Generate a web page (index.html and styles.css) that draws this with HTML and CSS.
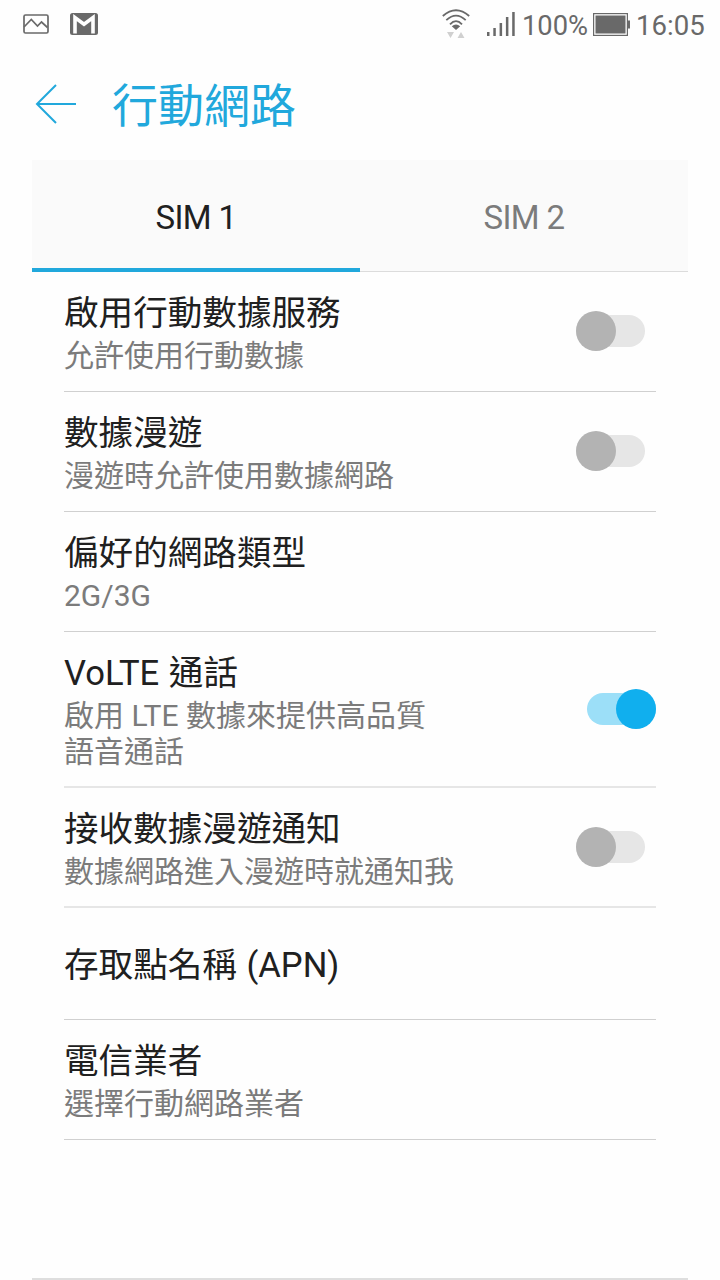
FILE: index.html
```html
<!DOCTYPE html>
<html lang="zh-Hant">
<head>
  <meta charset="UTF-8">
  <meta name="viewport" content="width=device-width, initial-scale=1.0">
  <title>行動網路</title>
  <link rel="stylesheet" href="styles.css">
</head>
<body>
  <div class="status">
    <svg class="status__picture" width="26" height="20" viewBox="0 0 26 20">
      <rect x="1" y="1" width="24" height="18" rx="1.5"/>
      <path d="M1 13L8.300 5.500L14.500 12L18.500 8L24.500 13.500"/>
    </svg>
    <svg class="status__mail" width="28" height="22" viewBox="0 0 28 22">
      <rect width="28" height="22" rx="2.500"/>
      <path d="M5 20.500V4.500L14 11.200L23 4.500V20.500"/>
    </svg>
    <svg class="status__wifi" width="28" height="30" viewBox="0 0 28 30">
      <path class="status__wave" d="M.8 7Q14 -4.500 27.200 7M4.300 11.200Q14 2 23.700 11.200M8 15.300Q14 9 20 15.300"/>
      <path class="status__dot" d="M9.800 17.300Q14 13.800 18.200 17.300L14 21z"/>
      <path class="status__traffic" d="M5 23h7l-3.500 6zM15.500 29h7l-3.500-6z"/>
    </svg>
    <svg class="status__signal" width="28" height="24" viewBox="0 0 28 24">
      <path d="M0 20h2.500v4H0zM6.300 16h2.500v8H6.300zM12.600 11h2.500v13h-2.500zM18.900 5h2.500v19h-2.500zM25.200 0h2.500v24h-2.500z"/>
    </svg>
    <span class="status__level">100%</span>
    <svg class="status__battery" width="37" height="23" viewBox="0 0 37 23">
      <rect class="status__case" x=".6" y=".6" width="33.800" height="21.800"/>
      <path d="M2.500 2.500h30v18h-30zM35 7.500h2v8h-2z"/>
    </svg>
    <span class="status__time">16:05</span>
  </div>

  <header class="header">
    <svg class="header__back" width="41" height="42" viewBox="0 0 41 42">
      <path d="M21 2L2 21L21 40M2 21H41"/>
    </svg>
    <h1 class="header__title">行動網路</h1>
  </header>

  <nav class="tabs">
    <div class="tabs__item tabs__item--active">SIM 1</div>
    <div class="tabs__item">SIM 2</div>
  </nav>

  <main class="settings">
    <div class="setting">
      <div class="setting__text">
        <div class="setting__title">啟用行動數據服務</div>
        <div class="setting__summary">允許使用行動數據</div>
      </div>
      <div class="switch"></div>
    </div>
    <div class="setting">
      <div class="setting__text">
        <div class="setting__title">數據漫遊</div>
        <div class="setting__summary">漫遊時允許使用數據網路</div>
      </div>
      <div class="switch"></div>
    </div>
    <div class="setting">
      <div class="setting__text">
        <div class="setting__title">偏好的網路類型</div>
        <div class="setting__summary">2G/3G</div>
      </div>
    </div>
    <div class="setting setting--tall">
      <div class="setting__text">
        <div class="setting__title">VoLTE 通話</div>
        <div class="setting__summary">啟用 LTE 數據來提供高品質<br>語音通話</div>
      </div>
      <div class="switch switch--on"></div>
    </div>
    <div class="setting setting--soft">
      <div class="setting__text">
        <div class="setting__title">接收數據漫遊通知</div>
        <div class="setting__summary">數據網路進入漫遊時就通知我</div>
      </div>
      <div class="switch"></div>
    </div>
    <div class="setting setting--single">
      <div class="setting__text">
        <div class="setting__title">存取點名稱 (APN)</div>
      </div>
    </div>
    <div class="setting">
      <div class="setting__text">
        <div class="setting__title">電信業者</div>
        <div class="setting__summary">選擇行動網路業者</div>
      </div>
    </div>
  </main>
</body>
</html>
```
FILE: styles.css
```css
:root {
  --color-accent: #21a8dc;
  --color-text: #202020;
  --color-muted: #7b7b7b;
  --color-status: #696969;
  --color-line: #d0d0d0;
}
*,
*::after,
*::before {
  box-sizing: border-box;
}
body {
  display: flex;
  flex-direction: column;
  margin: 0;
  height: 1280px;
  overflow: hidden;
  background-color: #fefefe;
  color: var(--color-text);
  font-family: Roboto, 'Noto Sans CJK TC', sans-serif;
}
svg {
  display: block;
  flex: none;
}
.status {
  display: flex;
  align-items: center;
  height: 48px;
  padding: 0 0 0 23px;
  color: var(--color-status);
  fill: currentColor;
  font-size: 28px;
  line-height: 48px;
}
.status__picture {
  fill: none;
  stroke: currentColor;
  stroke-width: 1.7;
}
.status__mail {
  margin-left: 21px;
}
.status__mail path {
  fill: none;
  stroke: #fefefe;
  stroke-width: 3.6;
}
.status__wifi {
  margin-left: 344px;
}
.status__wave {
  fill: none;
  stroke: currentColor;
  stroke-width: 1.8;
}
.status__traffic {
  fill: #d0d0d0;
}
.status__signal {
  margin-left: 17px;
}
.status__level {
  width: 71px;
  margin-left: 7px;
  padding-top: 3px;
  font-size: 27.3px;
}
.status__case {
  fill: none;
  stroke: currentColor;
  stroke-width: 1.2;
}
.status__time {
  margin-left: 6px;
  padding-top: 3px;
  font-size: 27.6px;
}
.header {
  display: flex;
  align-items: center;
  height: 112px;
  padding-left: 35px;
}
.header__back {
  fill: none;
  stroke: var(--color-accent);
  stroke-width: 2;
}
.header__title {
  margin: 4px 0 0 36px;
  color: var(--color-accent);
  font-size: 46px;
  font-weight: 400;
  line-height: 64px;
}
.tabs {
  display: flex;
  height: 112px;
  margin: 0 32px;
  background-color: #fafafa;
}
.tabs__item {
  flex: 1;
  border-bottom: 1px solid #dcdcdc;
  color: var(--color-muted);
  font-size: 33px;
  letter-spacing: -.6px;
  line-height: 115px;
  text-align: center;
}
.tabs__item--active {
  border-bottom: 4px solid var(--color-accent);
  color: var(--color-text);
}
.settings {
  flex: 1;
  padding: 0 64px;
  /* edge of the card below the list */
  background: linear-gradient(#dedede, #dedede) center bottom / 656px 2px no-repeat;
}
.setting {
  display: flex;
  align-items: center;
  justify-content: space-between;
  height: 120px;
  border-bottom: 1px solid var(--color-line);
}
.setting--tall {
  height: 156px;
}
.setting--tall,
.setting--soft {
  border-bottom: 2px solid #e6e6e6;
}
.setting--single {
  height: 112px;
}
.setting__text {
  align-self: flex-start;
  padding-top: 18px;
}
.setting--single .setting__text {
  align-self: center;
  padding-top: 3px;
}
.setting__title {
  font-size: 34.6px;
  line-height: 46px;
  word-spacing: 1px;
}
.setting__summary {
  margin-top: 2px;
  color: var(--color-muted);
  font-size: 30px;
  line-height: 36px;
}
.switch {
  position: relative;
  width: 80px;
  height: 40px;
  margin-bottom: 1px;
  padding: 4px 11px 4px 0;
}
.switch--on {
  margin-bottom: 0;
  padding: 4px 0 4px 11px;
}
.switch::before {
  content: '';
  display: block;
  height: 32px;
  border-radius: 16px;
  background-color: #e6e6e6;
}
.switch::after {
  content: '';
  position: absolute;
  top: 0;
  left: 0;
  width: 40px;
  height: 40px;
  border-radius: 50%;
  background-color: #b3b3b3;
}
.switch--on::before {
  background-color: #9cdff8;
}
.switch--on::after {
  left: 40px;
  background-color: #10afee;
}
```
